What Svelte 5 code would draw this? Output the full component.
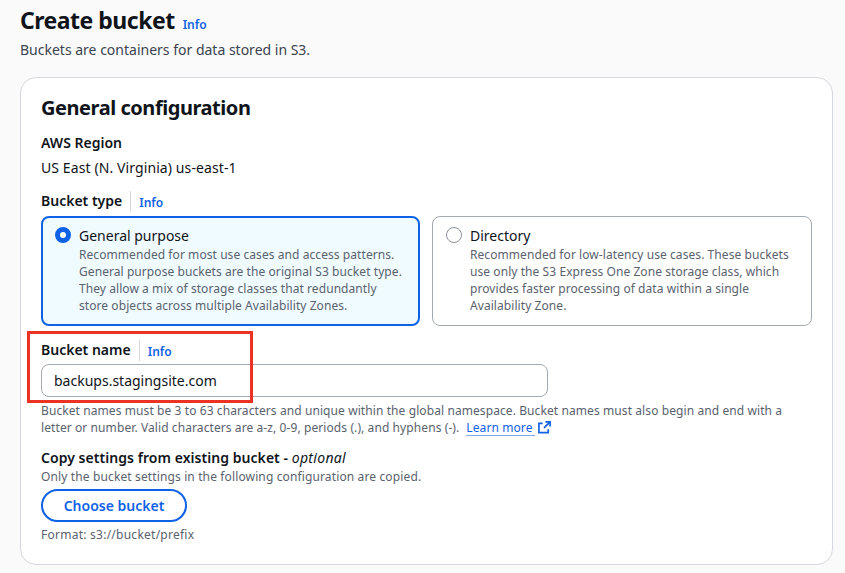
<script>
  let bucketName = $state('backups.stagingsite.com');
  let bucketType = $state('general');

  const types = [
    {
      id: 'general',
      title: 'General purpose',
      lines: [
        'Recommended for most use cases and access patterns.',
        'General purpose buckets are the original S3 bucket type.',
        'They allow a mix of storage classes that redundantly',
        'store objects across multiple Availability Zones.'
      ]
    },
    {
      id: 'directory',
      title: 'Directory',
      lines: [
        'Recommended for low-latency use cases. These buckets',
        'use only the S3 Express One Zone storage class, which',
        'provides faster processing of data within a single',
        'Availability Zone.'
      ]
    }
  ];
</script>

<main class="page">
  <header class="head">
    <div class="title-row">
      <h1>Create bucket</h1>
      <a class="info" href="#info">Info</a>
    </div>
    <p class="sub">Buckets are containers for data stored in S3.</p>
  </header>

  <section class="card">
    <h2>General configuration</h2>

    <div class="label region-label">AWS Region</div>
    <div class="region">US East (N. Virginia) us-east-1</div>

    <div class="label-row type-label">
      <span class="label">Bucket type</span>
      <a class="info divided" href="#info">Info</a>
    </div>

    <div class="tiles">
      {#each types as t}
        <button class="tile" class:selected={bucketType === t.id} onclick={() => (bucketType = t.id)}>
          <span class="radio"></span>
          <span class="tile-text">
            <span class="tile-title">{t.title}</span>
            {#each t.lines as line}
              <span class="tile-line">{line}</span>
            {/each}
          </span>
        </button>
      {/each}
    </div>

    <div class="name-field">
      <div class="label-row">
        <span class="label">Bucket name</span>
        <a class="info divided" href="#info">Info</a>
      </div>
      <input class="name-input" bind:value={bucketName} />
      <span class="callout"></span>
    </div>

    <div class="help">
      <div>Bucket names must be 3 to 63 characters and unique within the global namespace. Bucket names must also begin and end with a</div>
      <div class="help-last">
        <span>letter or number. Valid characters are a-z, 0-9, periods (.), and hyphens (-).</span>
        <a class="learn" href="#learn">Learn more</a>
        <svg class="ext" viewBox="0 0 14 14" fill="none" stroke="currentColor" stroke-width="1.8" aria-hidden="true">
          <path d="M5 2.5H1v10h10V9" />
          <path d="M8 1h5v5M13 1 6.5 7.5" />
        </svg>
      </div>
    </div>

    <div class="label copy-label">Copy settings from existing bucket - <i>optional</i></div>
    <p class="copy-sub">Only the bucket settings in the following configuration are copied.</p>
    <button class="choose">Choose bucket</button>
    <p class="format">Format: s3://bucket/prefix</p>
  </section>
</main>

<style>
  :global(body) {
    margin: 0;
    background: #fafafa;
    font-family: "Noto Sans", "Open Sans", sans-serif;
    color: #16191f;
  }
  .page {
    height: 573px;
    overflow: hidden;
    box-sizing: border-box;
    padding: 5px 12px 0 20px;
  }
  .title-row {
    display: flex;
    align-items: baseline;
    gap: 8px;
  }
  h1 {
    margin: 0;
    font-size: 23px;
    line-height: 30px;
    font-weight: 700;
    letter-spacing: -0.5px;
    color: #0f141a;
  }
  .info {
    font-size: 12px;
    font-weight: 600;
    color: #0f62e6;
    text-decoration: none;
  }
  .sub {
    margin: 5px 0 0;
    font-size: 14px;
    line-height: 20px;
    color: #3b4350;
  }
  .card {
    margin-top: 17px;
    height: 488px;
    box-sizing: border-box;
    padding: 16px 20px 0 20px;
    background: #fff;
    border: 1px solid #d5d8dc;
    border-radius: 16px;
  }
  h2 {
    margin: 0;
    font-size: 20px;
    line-height: 28px;
    font-weight: 700;
    letter-spacing: -0.45px;
    color: #0f141a;
  }
  .label {
    font-size: 14px;
    line-height: 20px;
    font-weight: 600;
    color: #0f141a;
  }
  .region-label {
    margin-top: 11px;
  }
  .region {
    margin-top: 5px;
    font-size: 14px;
    line-height: 20px;
    letter-spacing: 0.1px;
    color: #0f141a;
  }
  .label-row {
    display: flex;
    align-items: center;
    height: 20px;
  }
  .type-label {
    margin-top: 13px;
  }
  .divided {
    margin-left: 8px;
    padding: 3px 0 0 8px;
    border-left: 1px solid #d5d8dc;
    line-height: 18px;
  }
  .tiles {
    display: grid;
    grid-template-columns: 379px 380px;
    gap: 12px;
    margin-top: 5px;
  }
  .tile {
    display: flex;
    gap: 8px;
    height: 110px;
    box-sizing: border-box;
    padding: 9px 13px;
    text-align: left;
    font: inherit;
    background: #fff;
    border: 1px solid #a4a9b1;
    border-radius: 8px;
  }
  .tile.selected {
    background: #f0fbff;
    border: 2px solid #0f62e6;
    padding: 8px 12px;
  }
  .radio {
    flex: none;
    width: 16px;
    height: 16px;
    margin-top: 1px;
    box-sizing: border-box;
    border: 1px solid #8c929b;
    border-radius: 50%;
    background: #fff;
  }
  .selected .radio {
    border: 5px solid #0f62e6;
  }
  .tile-text {
    display: flex;
    flex-direction: column;
  }
  .tile-title {
    font-size: 14px;
    line-height: 20px;
    color: #0f141a;
  }
  .tile-line {
    font-size: 12px;
    line-height: 17px;
    letter-spacing: 0.07px;
    color: #5a626e;
    white-space: nowrap;
  }
  .name-field {
    position: relative;
    margin-top: 14px;
  }
  .name-input {
    display: block;
    width: 507px;
    height: 33px;
    margin-top: 4px;
    box-sizing: border-box;
    padding: 0 12px;
    font: inherit;
    font-size: 14px;
    color: #0f141a;
    background: #fff;
    border: 1px solid #a4a9b1;
    border-radius: 8px;
    outline: none;
  }
  .callout {
    position: absolute;
    left: -14px;
    top: -9px;
    width: 226px;
    height: 72px;
    box-sizing: border-box;
    border: 3px solid #ea3323;
    pointer-events: none;
  }
  .help {
    margin: 5px 0 0;
    font-size: 12px;
    line-height: 17px;
    letter-spacing: 0.09px;
    color: #5a626e;
  }
  .help-last {
    display: flex;
    align-items: center;
  }
  .learn {
    margin-left: 7px;
    padding-right: 2px;
    line-height: 15px;
    color: #0f62e6;
    text-decoration: none;
    border-bottom: 1px solid #7fa8ee;
  }
  .ext {
    width: 13px;
    height: 13px;
    margin-left: 3px;
    color: #0f62e6;
  }
  .copy-label {
    margin-top: 12px;
    letter-spacing: 0.05px;
  }
  .copy-label i {
    font-weight: 400;
    letter-spacing: 0.3px;
  }
  .copy-sub {
    margin: 1px 0 0;
    font-size: 12px;
    line-height: 16px;
    letter-spacing: 0.13px;
    color: #5a626e;
  }
  .choose {
    display: block;
    width: 146px;
    height: 33px;
    margin-top: 4px;
    padding: 0;
    font: inherit;
    font-size: 14px;
    font-weight: 600;
    color: #0f62e6;
    background: #fff;
    border: 2px solid #0f62e6;
    border-radius: 17px;
  }
  .format {
    margin: 5px 0 0;
    font-size: 12px;
    line-height: 16px;
    letter-spacing: 0.25px;
    color: #5a626e;
  }
</style>
